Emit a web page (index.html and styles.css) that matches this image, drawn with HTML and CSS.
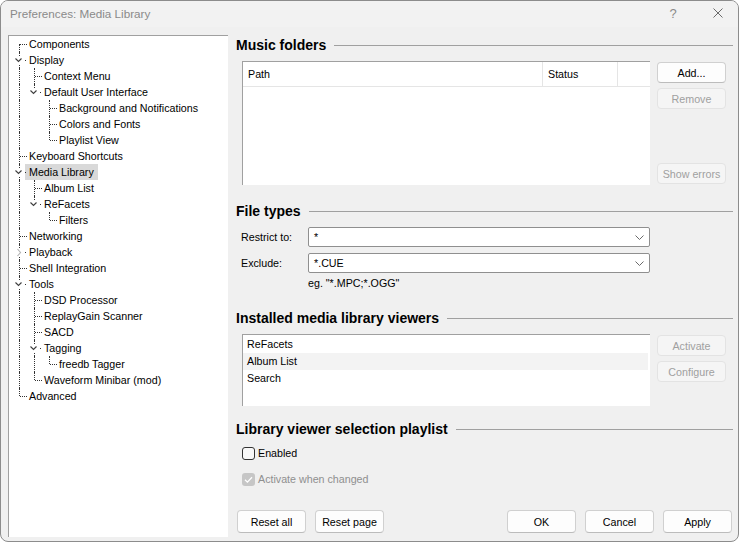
FILE: index.html
```html
<!DOCTYPE html>
<html lang="en">
<head>
<meta charset="utf-8">
<title>Preferences: Media Library</title>
<link rel="stylesheet" href="styles.css">
</head>
<body>
<div class="window">
  <div class="titlebar">
    <span class="title">Preferences: Media Library</span>
    <span class="help">?</span>
    <span class="close"><svg width="10" height="10" viewBox="0 0 10 10"><path d="M0.5 0.5L9.5 9.5M9.5 0.5L0.5 9.5"/></svg></span>
  </div>
  <div class="client">
    <div class="tree">
      <div class="node"><span class="g f"></span><span class="label">Components</span></div>
      <div class="node"><span class="g x"><svg class="chev" viewBox="0 0 8 9"><path d="M0.5 2.5L3.5 5.5L6.5 2.5"/></svg></span><span class="label">Display</span></div>
      <div class="node"><span class="g v"></span><span class="g t"></span><span class="label">Context Menu</span></div>
      <div class="node"><span class="g v"></span><span class="g xl"><svg class="chev" viewBox="0 0 8 9"><path d="M0.5 2.5L3.5 5.5L6.5 2.5"/></svg></span><span class="label">Default User Interface</span></div>
      <div class="node"><span class="g v"></span><span class="g"></span><span class="g t"></span><span class="label">Background and Notifications</span></div>
      <div class="node"><span class="g v"></span><span class="g"></span><span class="g t"></span><span class="label">Colors and Fonts</span></div>
      <div class="node"><span class="g v"></span><span class="g"></span><span class="g l"></span><span class="label">Playlist View</span></div>
      <div class="node"><span class="g t"></span><span class="label">Keyboard Shortcuts</span></div>
      <div class="node"><span class="g x"><svg class="chev" viewBox="0 0 8 9"><path d="M0.5 2.5L3.5 5.5L6.5 2.5"/></svg></span><span class="label selected">Media Library</span></div>
      <div class="node"><span class="g v"></span><span class="g t"></span><span class="label">Album List</span></div>
      <div class="node"><span class="g v"></span><span class="g xl"><svg class="chev" viewBox="0 0 8 9"><path d="M0.5 2.5L3.5 5.5L6.5 2.5"/></svg></span><span class="label">ReFacets</span></div>
      <div class="node"><span class="g v"></span><span class="g"></span><span class="g l"></span><span class="label">Filters</span></div>
      <div class="node"><span class="g t"></span><span class="label">Networking</span></div>
      <div class="node"><span class="g x closed"><svg class="chev" viewBox="0 0 8 9"><path d="M2.5 1L5.5 4.5L2.5 8"/></svg></span><span class="label">Playback</span></div>
      <div class="node"><span class="g t"></span><span class="label">Shell Integration</span></div>
      <div class="node"><span class="g x"><svg class="chev" viewBox="0 0 8 9"><path d="M0.5 2.5L3.5 5.5L6.5 2.5"/></svg></span><span class="label">Tools</span></div>
      <div class="node"><span class="g v"></span><span class="g t"></span><span class="label">DSD Processor</span></div>
      <div class="node"><span class="g v"></span><span class="g t"></span><span class="label">ReplayGain Scanner</span></div>
      <div class="node"><span class="g v"></span><span class="g t"></span><span class="label">SACD</span></div>
      <div class="node"><span class="g v"></span><span class="g x"><svg class="chev" viewBox="0 0 8 9"><path d="M0.5 2.5L3.5 5.5L6.5 2.5"/></svg></span><span class="label">Tagging</span></div>
      <div class="node"><span class="g v"></span><span class="g v"></span><span class="g l"></span><span class="label">freedb Tagger</span></div>
      <div class="node"><span class="g v"></span><span class="g l"></span><span class="label">Waveform Minibar (mod)</span></div>
      <div class="node"><span class="g l"></span><span class="label">Advanced</span></div>
    </div>

    <div class="pane">
      <section class="group">
        <h2 class="heading">Music folders</h2>
        <div class="group-body music-body">
          <div class="listview music-list">
            <div class="lv-header">
              <span class="col col-path">Path</span>
              <span class="col col-status">Status</span>
              <span class="col col-rest"></span>
            </div>
          </div>
          <div class="side-buttons">
            <button class="btn">Add...</button>
            <button class="btn" disabled>Remove</button>
            <button class="btn push-bottom" disabled>Show errors</button>
          </div>
        </div>
      </section>

      <section class="group filetypes">
        <h2 class="heading">File types</h2>
        <div class="form-row first">
          <span class="form-label">Restrict to:</span>
          <div class="combo"><span class="combo-value">*</span><svg class="combo-arrow" width="9" height="5" viewBox="0 0 9 5"><path d="M0.5 0.5L4.5 4.5L8.5 0.5"/></svg></div>
        </div>
        <div class="form-row">
          <span class="form-label">Exclude:</span>
          <div class="combo"><span class="combo-value">*.CUE</span><svg class="combo-arrow" width="9" height="5" viewBox="0 0 9 5"><path d="M0.5 0.5L4.5 4.5L8.5 0.5"/></svg></div>
        </div>
        <div class="hint">eg. "*.MPC;*.OGG"</div>
      </section>

      <section class="group viewers">
        <h2 class="heading">Installed media library viewers</h2>
        <div class="group-body viewers-body">
          <div class="listview viewer-list">
            <div class="item">ReFacets</div>
            <div class="item hot">Album List</div>
            <div class="item">Search</div>
          </div>
          <div class="side-buttons top-offset">
            <button class="btn" disabled>Activate</button>
            <button class="btn" disabled>Configure</button>
          </div>
        </div>
      </section>

      <section class="group playlist">
        <h2 class="heading">Library viewer selection playlist</h2>
        <label class="check first">
          <span class="box"></span><span class="check-label">Enabled</span>
        </label>
        <label class="check disabled">
          <span class="box checked"><svg width="13" height="13" viewBox="0 0 13 13"><path d="M3 6.8L5.4 9.1L10 4.2"/></svg></span><span class="check-label">Activate when changed</span>
        </label>
      </section>

      <div class="footer">
        <button class="btn big">Reset all</button>
        <button class="btn big">Reset page</button>
        <button class="btn big push-right">OK</button>
        <button class="btn big">Cancel</button>
        <button class="btn big">Apply</button>
      </div>
    </div>
  </div>
</div>
</body>
</html>
```
FILE: styles.css
```css
* { box-sizing: border-box; }

html, body {
  margin: 0;
  padding: 0;
  background: #ffffff;
}

body {
  font-family: "Liberation Sans", Arial, sans-serif;
  font-size: 10.7px;
  color: #000;
}

.window {
  width: 739px;
  height: 542px;
  border: 1px solid #8c8c8c;
  border-radius: 8px;
  background: #f0f0f0;
  display: flex;
  flex-direction: column;
  overflow: hidden;
}

/* title bar */
.titlebar {
  height: 26px;
  flex: none;
  display: flex;
  align-items: center;
  padding: 0 15px 2px 9px;
  background: #f2f2f2;
}
.title {
  font-size: 11.7px;
  color: #8a8a8a;
}
.help {
  margin-left: auto;
  width: 10px;
  text-align: center;
  font-size: 13px;
  color: #8a8a8a;
}
.close {
  margin-left: 35px;
  width: 10px;
  height: 10px;
  display: flex;
}
.close path {
  stroke: #6a6a6a;
  stroke-width: 1;
  fill: none;
}

/* client */
.client {
  flex: 1;
  display: flex;
  padding: 8px 0 0 7px;
  min-height: 0;
}

/* tree */
.tree {
  width: 220px;
  height: 502px;
  flex: none;
  background: #fff;
  border-left: 1px solid #a0a0a0;
  border-top: 1px solid #a0a0a0;
  padding-left: 3px;
}
.node {
  display: flex;
  align-items: center;
  height: 16px;
  white-space: nowrap;
}
.g {
  position: relative;
  width: 15px;
  height: 16px;
  flex: none;
}
.g::before,
.g::after {
  content: "";
  position: absolute;
}
.v::before,
.t::before,
.x::before {
  left: 7px;
  top: 0;
  bottom: 0;
  border-left: 1px dotted #333;
}
.l::before,
.xl::before {
  left: 7px;
  top: 0;
  height: 8px;
  border-left: 1px dotted #333;
}
.f::before {
  left: 7px;
  top: 8px;
  bottom: 0;
  border-left: 1px dotted #333;
}
.t::after,
.l::after,
.f::after {
  left: 8px;
  top: 8px;
  width: 7px;
  border-top: 1px dotted #333;
}
.x::after,
.xl::after {
  left: 13px;
  top: 8px;
  width: 1px;
  height: 1px;
  background: #333;
}
.chev {
  position: absolute;
  left: 3px;
  top: 4px;
  width: 8px;
  height: 9px;
  background: #fff;
  z-index: 1;
}
.chev path {
  fill: none;
  stroke: #404040;
  stroke-width: 1.15;
}
.closed .chev path {
  stroke: #b5b5b5;
}
.label {
  margin-left: -2px;
  padding: 0 4px;
  height: 16px;
  line-height: 16px;
}
.label.selected {
  background: #d9d9d9;
}

/* right pane */
.pane {
  flex: 1;
  display: flex;
  flex-direction: column;
  min-width: 0;
}
.group {
  display: flex;
  flex-direction: column;
}
.heading {
  margin: 0;
  height: 20px;
  display: flex;
  align-items: center;
  padding: 0 5px 0 8px;
  font-size: 14px;
  font-weight: bold;
  color: #000;
  white-space: nowrap;
}
.heading::after {
  content: "";
  flex: 1;
  height: 1px;
  margin-left: 8px;
  background: #a0a0a0;
}

.group-body {
  display: flex;
  gap: 7px;
  padding-left: 14px;
  margin-top: 6px;
}

.listview {
  width: 408px;
  background: #fff;
  border-top: 1px solid #a0a0a0;
  border-left: 1px solid #a0a0a0;
}
.music-list { height: 124px; }
.viewer-list { height: 72px; padding-top: 1px; }

.lv-header {
  display: flex;
  height: 25px;
  border-bottom: 1px solid #e5e5e5;
}
.col {
  display: flex;
  align-items: center;
  padding-left: 5px;
  border-right: 1px solid #e5e5e5;
}
.col-path { width: 300px; }
.col-status { width: 75px; }
.col-rest { flex: 1; border-right: none; }

.item {
  height: 17px;
  line-height: 17px;
  padding-left: 4px;
  margin-right: 2px;
}
.item.hot { background: #f3f3f3; }

.side-buttons {
  width: 69px;
  display: flex;
  flex-direction: column;
  gap: 5px;
  padding-top: 1px;
}
.top-offset { padding-top: 1px; }
.push-bottom { margin-top: auto; margin-bottom: 1px; }

/* buttons */
.btn {
  font-family: inherit;
  font-size: 10.7px;
  color: #000;
  height: 21px;
  width: 69px;
  padding: 0;
  background: #fdfdfd;
  border: 1px solid #d0d0d0;
  border-bottom-color: #bcbcbc;
  border-radius: 4px;
  flex: none;
}
.btn:disabled {
  color: #a0a0a0;
  background: #f5f5f5;
  border-color: #e3e3e3;
}
.btn.big { height: 23px; }

/* file types */
.filetypes { margin-top: 16px; }
.form-row {
  display: flex;
  align-items: center;
  padding-left: 13px;
  margin-top: 6px;
}
.form-label {
  width: 67px;
  flex: none;
}
.combo {
  width: 342px;
  height: 20px;
  display: flex;
  align-items: center;
  padding: 0 5px;
  background: #fff;
  border: 1px solid #8f8f8f;
  border-radius: 2px;
}
.combo-value { flex: 1; }
.combo-arrow path {
  fill: none;
  stroke: #6a6a6a;
  stroke-width: 1;
}
.hint {
  margin-top: 4px;
  padding-left: 80px;
  height: 12px;
  line-height: 12px;
}

/* viewers */
.viewers { margin-top: 19px; }

/* playlist */
.playlist { margin-top: 13px; }
.check {
  display: flex;
  align-items: center;
  height: 16px;
  padding-left: 14px;
  gap: 3px;
}
.check.first { margin-top: 6px; }
.check.disabled { margin-top: 10px; color: #8f8f8f; }
.box {
  width: 13px;
  height: 13px;
  border: 1px solid #333;
  border-radius: 3px;
  background: #f8f8f8;
  display: flex;
}
.box.checked {
  border: none;
  background: #c6c6c6;
}
.box svg path {
  fill: none;
  stroke: #fff;
  stroke-width: 1.3;
}

/* footer */
.footer {
  margin-top: auto;
  display: flex;
  gap: 9px;
  padding: 0 6px 8px 9px;
}
.push-right { margin-left: auto; }
```
